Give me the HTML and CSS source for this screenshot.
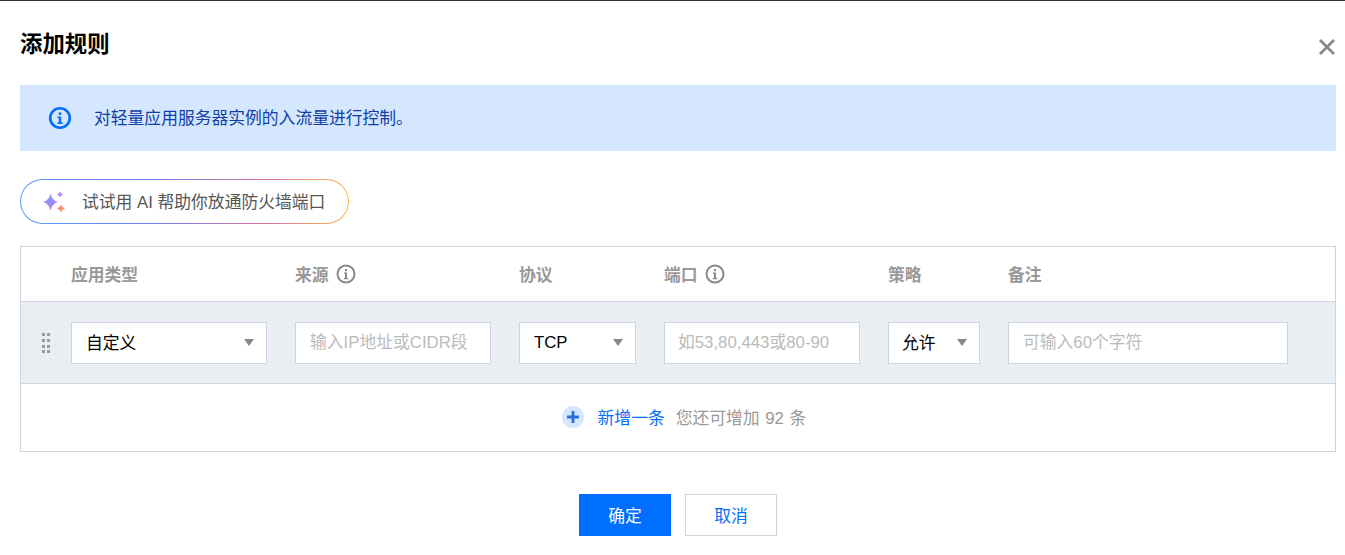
FILE: index.html
```html
<!DOCTYPE html>
<html lang="zh-CN">
<head>
<meta charset="utf-8">
<title>添加规则</title>
<link rel="stylesheet" href="styles.css">
</head>
<body>
<div class="dialog">
  <header class="head">
    <h1 class="title">添加规则</h1>
    <button class="close" aria-label="关闭">
      <svg width="18" height="18" viewBox="0 0 18 18"><path d="M2 2 16 16M16 2 2 16" stroke="#888" stroke-width="2.800" fill="none"/></svg>
    </button>
  </header>
  <div class="alert">
    <svg class="alert-icon" width="24" height="24" viewBox="0 0 24 24"><circle cx="12" cy="12" r="9.800" fill="none" stroke="#006eff" stroke-width="2.600"/><rect x="10.800" y="6.400" width="2.400" height="2.600" fill="#006eff"/><path d="M9.400 10.600h3.800v6h1.600v1.400H9.400v-1.400h1.400v-4.600H9.400z" fill="#006eff"/></svg>
    <span class="lift">对轻量应用服务器实例的入流量进行控制。</span>
  </div>
  <div class="ai-row">
    <button class="ai-pill">
      <svg width="24" height="24" viewBox="0 0 24 24">
        <defs>
          <linearGradient id="sa" x1="0" y1="0" x2="1" y2="1"><stop offset="0" stop-color="#7d9cff"/><stop offset="1" stop-color="#b87cf2"/></linearGradient>
          <linearGradient id="sb" x1="0" y1="0" x2="1" y2="1"><stop offset="0" stop-color="#f0709f"/><stop offset="1" stop-color="#ffb03c"/></linearGradient>
        </defs>
        <path d="M8.500 3.500Q10 10.500 16 12 10 13.500 8.500 20.500 7 13.500 1 12 7 10.500 8.500 3.500Z" fill="url(#sa)"/>
        <path d="M18 1.500Q18.800 3.700 21 4.500 18.800 5.300 18 7.500 17.200 5.300 15 4.500 17.200 3.700 18 1.500Z" fill="#b98af5"/>
        <path d="M19 14.500Q19.900 17.600 23 18.500 19.900 19.400 19 22.500 18.100 19.400 15 18.500 18.100 17.600 19 14.500Z" fill="url(#sb)"/>
      </svg>
      <span class="lift">试试用 AI 帮助你放通防火墙端口</span>
    </button>
  </div>
  <div class="table">
    <div class="row row-head">
      <div class="col c-type">应用类型</div>
      <div class="col c-src">来源<svg class="tip" width="20" height="20" viewBox="0 0 20 20"><circle cx="10" cy="10" r="8.500" fill="none" stroke="#888" stroke-width="2"/><rect x="9" y="5" width="2" height="2.200" fill="#888"/><path d="M8 8.600h3v5.400h1.200v1.200H7.800V14H9V9.800H8z" fill="#888"/></svg></div>
      <div class="col c-proto">协议</div>
      <div class="col c-port">端口<svg class="tip" width="20" height="20" viewBox="0 0 20 20"><circle cx="10" cy="10" r="8.500" fill="none" stroke="#888" stroke-width="2"/><rect x="9" y="5" width="2" height="2.200" fill="#888"/><path d="M8 8.600h3v5.400h1.200v1.200H7.800V14H9V9.800H8z" fill="#888"/></svg></div>
      <div class="col c-policy">策略</div>
      <div class="col c-note">备注</div>
    </div>
    <div class="row row-body">
      <svg class="grip" width="10" height="22" viewBox="0 0 10 22"><g fill="#999"><rect x="1" y="1" width="3" height="3"/><rect x="6" y="1" width="3" height="3"/><rect x="1" y="7" width="3" height="3"/><rect x="6" y="7" width="3" height="3"/><rect x="1" y="13" width="3" height="3"/><rect x="6" y="13" width="3" height="3"/><rect x="1" y="18" width="3" height="3"/><rect x="6" y="18" width="3" height="3"/></g></svg>
      <div class="col c-type select"><span class="lift">自定义</span><i class="caret"></i></div>
      <input class="col c-src field" placeholder="输入IP地址或CIDR段">
      <div class="col c-proto select"><span>TCP</span><i class="caret"></i></div>
      <input class="col c-port field" placeholder="如53,80,443或80-90">
      <div class="col c-policy select"><span class="lift">允许</span><i class="caret"></i></div>
      <input class="col c-note field" placeholder="可输入60个字符">
    </div>
    <div class="add">
      <span class="add-icon"><svg width="12" height="12" viewBox="0 0 12 12"><path d="M0 6H12M6 0V12" stroke="#2a6fdc" stroke-width="2.800"/></svg></span>
      <a class="add-link">新增一条</a>
      <span class="add-hint">您还可增加 92 条</span>
    </div>
  </div>
  <footer class="foot">
    <button class="btn btn-primary">确定</button>
    <button class="btn btn-ghost">取消</button>
  </footer>
</div>
</body>
</html>
```
FILE: styles.css
```css
* { box-sizing: border-box; }
html, body { margin: 0; padding: 0; background: #fff; }
body {
  font-family: "Liberation Sans", "Noto Sans CJK SC", sans-serif;
  font-size: 16.8px;
  color: #000;
  overflow: hidden;
}
.lift { padding-bottom: 2px; }
.dialog {
  height: 555px;
  border-top: 1px solid #333;
  padding: 0 9px 0 20px;
}
.head {
  height: 84px;
  display: flex;
  justify-content: space-between;
  align-items: flex-start;
}
.title {
  margin: 29px 0 0;
  font-size: 22.4px;
  line-height: 30px;
  font-weight: 700;
}
.close {
  margin: 37px 0 0;
  padding: 0;
  width: 18px;
  height: 18px;
  border: 0;
  background: none;
  display: block;
}
.close svg { display: block; }
.alert {
  height: 66px;
  background: #d5e7ff;
  color: #0f3ea8;
  display: flex;
  align-items: center;
  padding-left: 28px;
  gap: 22px;
}
.ai-row { margin-top: 28px; display: flex; }
.ai-pill {
  width: 329px;
  height: 45px;
  padding: 0 0 0 21px;
  border: 1px solid transparent;
  border-radius: 23px;
  background:
    linear-gradient(#fff, #fff) padding-box,
    linear-gradient(90deg, #5a9bff 0%, #6a80f0 40%, #e0709f 75%, #ffb648 100%) border-box;
  display: flex;
  align-items: center;
  gap: 16px;
  font: inherit;
  color: #555;
}
.table {
  margin-top: 22px;
  border: 1px solid #cfd5de;
}
.row {
  display: flex;
  gap: 28px;
  align-items: center;
  padding-left: 50px;
}
.row-head {
  height: 55px;
  border-bottom: 1px solid #cfd5de;
  color: #999;
  font-weight: 700;
}
.row-body {
  position: relative;
  height: 82px;
  background: #e9eef3;
  border-bottom: 1px solid #cfd5de;
}
.grip { position: absolute; left: 20px; top: 30px; }
.col { flex: none; }
.c-type, .c-src, .c-port { width: 196px; }
.c-proto { width: 117px; }
.c-policy { width: 92px; }
.c-note { width: 280px; }
.row-head .col { display: flex; align-items: center; gap: 7px; }
.select, .field {
  height: 42px;
  background: #fff;
  border: 1px solid #cfd5de;
  font: inherit;
  padding: 0 14px;
  color: #000;
  border-radius: 0;
  outline: 0;
}
.select { display: flex; align-items: center; justify-content: space-between; padding-right: 12px; }
.field.c-port, .select.c-policy { padding-left: 13px; }
.field::placeholder { color: #bbb; opacity: 1; }
.caret {
  width: 0;
  height: 0;
  border-left: 5.500px solid transparent;
  border-right: 5.500px solid transparent;
  border-top: 7px solid #888;
}
.add {
  height: 67px;
  display: flex;
  align-items: center;
  justify-content: center;
  padding: 0 0 2px 12px;
}
.add-icon {
  width: 22px;
  height: 22px;
  border-radius: 50%;
  background: #d5e7ff;
  display: flex;
  align-items: center;
  justify-content: center;
  margin-right: 14px;
}
.add-link { color: #006eff; margin-right: 11px; }
.add-hint { color: #999; word-spacing: 1px; }
.foot {
  margin-top: 42px;
  display: flex;
  justify-content: center;
  gap: 14px;
}
.btn {
  width: 92px;
  height: 42px;
  font: inherit;
  padding: 0;
  border-radius: 0;
}
.btn-primary { background: #006eff; border: 0; color: #fff; }
.btn-ghost { background: #fff; border: 1px solid #cfd5de; color: #006eff; }
```
